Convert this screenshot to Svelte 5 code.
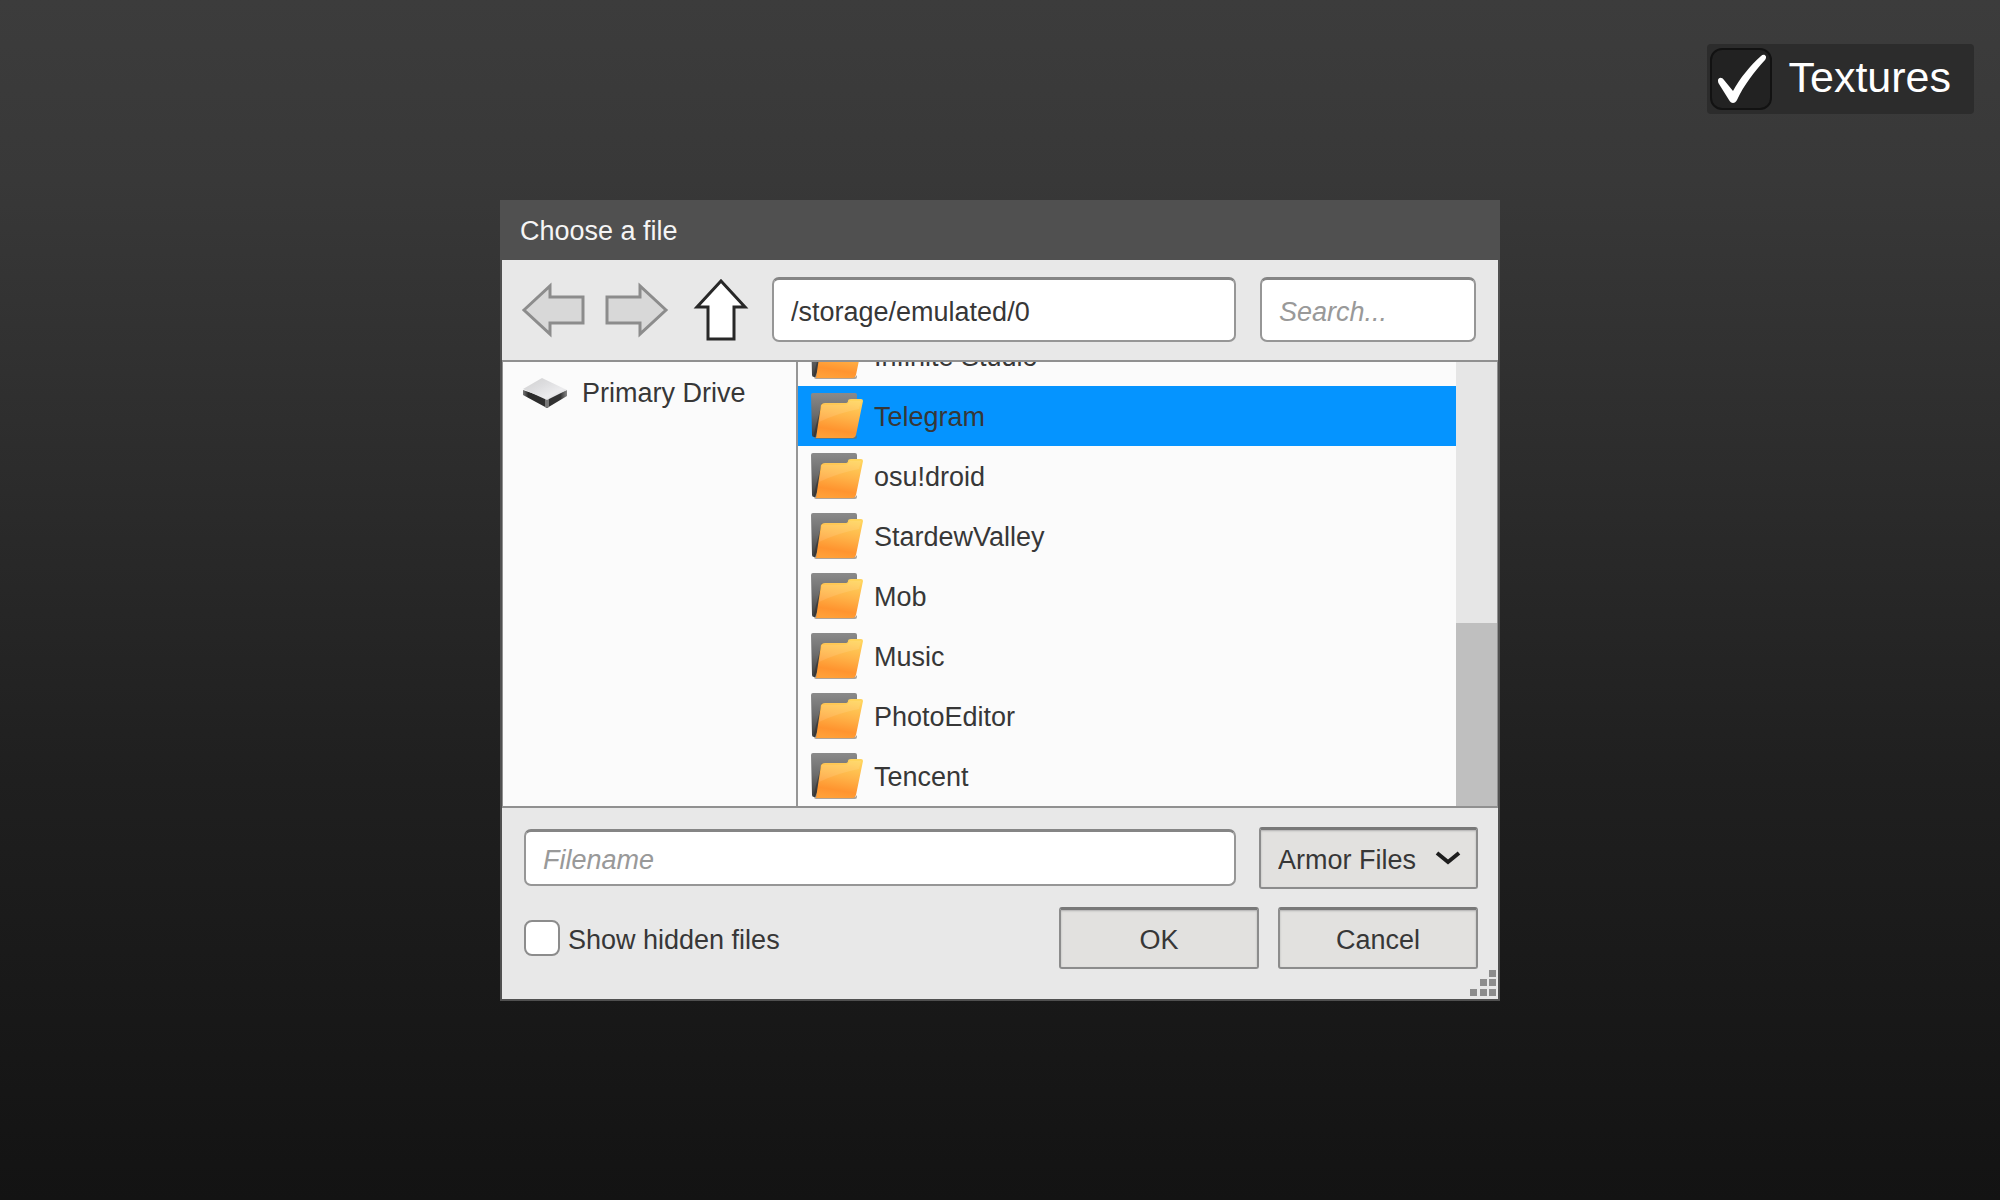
<script>
  const folders = [
    'Infinite Studio',
    'Telegram',
    'osu!droid',
    'StardewValley',
    'Mob',
    'Music',
    'PhotoEditor',
    'Tencent'
  ];

  let textures = $state(true);
  let showHidden = $state(false);
  let selected = $state('Telegram');
  let path = $state('/storage/emulated/0');
  let search = $state('');
  let filename = $state('');
  let filter = $state('Armor Files');
</script>

<main class="stage">
  <label class="toggle">
    <input class="sr-only" type="checkbox" bind:checked={textures} />
    <span class="toggle-box">
      {#if textures}
        <svg width="58" height="58" viewBox="0 0 58 58" aria-hidden="true">
          <path
            d="M6 30c1-3 4-3 6 0l9 11C28 28 38 16 49 6c3-3 7 0 4 4C42 22 32 35 25 50c-2 4-6 4-8 0L7 34c-1-1-1-3-1-4Z"
            fill="#fff"
          />
        </svg>
      {/if}
    </span>
    <span class="toggle-text">Textures</span>
  </label>

  <section class="dialog" role="dialog" aria-labelledby="dialog-title">
    <h1 class="titlebar" id="dialog-title">Choose a file</h1>

    <div class="toolbar">
      <button class="nav" aria-label="Back" disabled>
        <svg width="64" height="56" viewBox="0 0 64 56">
          <path d="M2 28 28 4v11h33v26H28v11Z" />
        </svg>
      </button>
      <button class="nav" aria-label="Forward" disabled>
        <svg width="64" height="56" viewBox="0 0 64 56">
          <path d="M61 28 35 4v11H2v26h33v11Z" />
        </svg>
      </button>
      <button class="nav up" aria-label="Up one level">
        <svg width="56" height="64" viewBox="0 0 56 64">
          <path d="M28 3 52 29H41v32H15V29H4Z" />
        </svg>
      </button>
      <input class="field path" type="text" aria-label="Path" bind:value={path} />
      <input class="field search" type="text" aria-label="Search" placeholder="Search..." bind:value={search} />
    </div>

    <div class="browser">
      <nav class="places">
        <button class="place">
          <svg width="46" height="32" viewBox="0 0 46 32" aria-hidden="true">
            <defs>
              <linearGradient id="drive-top" x1="0" y1="0" x2="1" y2="1">
                <stop offset="0" stop-color="#d0d0d0" />
                <stop offset="0.4" stop-color="#dedee0" />
                <stop offset="0.7" stop-color="#ececee" />
                <stop offset="1" stop-color="#c4c4c6" />
              </linearGradient>
              <linearGradient id="drive-side" x1="0" y1="0" x2="1" y2="0">
                <stop offset="0" stop-color="#777" />
                <stop offset="0.12" stop-color="#2a2a2a" />
                <stop offset="0.85" stop-color="#343434" />
                <stop offset="1" stop-color="#888" />
              </linearGradient>
            </defs>
            <path d="M1 13 24 21 45 13v6L25 31 1 18Z" fill="url(#drive-side)" />
            <path d="M23 22v8l2 1 2-1v-8Z" fill="#777" />
            <path d="M1 12 20 1l25 12-20 10Z" fill="url(#drive-top)" />
          </svg>
          Primary Drive
        </button>
      </nav>

      <ul class="files">
        {#each folders as folder}
          <li>
            <button class="file" class:selected={folder === selected} onclick={() => (selected = folder)}>
              <svg width="54" height="50" viewBox="0 0 54 50" aria-hidden="true">
                <defs>
                  <linearGradient id="folder-back" x1="0" y1="0" x2="0" y2="1">
                    <stop offset="0" stop-color="#8a8a8a" />
                    <stop offset="0.5" stop-color="#6c6c6c" />
                    <stop offset="1" stop-color="#3c3c3c" />
                  </linearGradient>
                  <linearGradient id="folder-front" x1="0.6" y1="0" x2="0.4" y2="1">
                    <stop offset="0" stop-color="#ffd45c" />
                    <stop offset="0.45" stop-color="#ffb348" />
                    <stop offset="0.8" stop-color="#ff942f" />
                    <stop offset="1" stop-color="#ffa038" />
                  </linearGradient>
                </defs>
                <path d="M1 4q0-2 2-2h42q2 0 2 2v10H20L5 46H4q-2 0-2-2Z" fill="url(#folder-back)" />
                <path d="M12 12 4 42v4h4l6-32Z" fill="#303030" fill-opacity="0.6" />
                <path d="M4 46h40q2 0 3-2v2q0 2-2 2H6q-2 0-2-2Z" fill="#7d6a55" fill-opacity="0.6" />
                <path d="M11 14q1-2 4-2h20q3 0 3-2t3-2h10q2 0 2 2l-7 34q-1 3-3 3H6Z" fill="url(#folder-front)" />
                <path d="M12 14h21q5 0 7-4h11l-2 8Q28 22 9 31Z" fill="#fff" fill-opacity="0.1" />
              </svg>
              {folder}
            </button>
          </li>
        {/each}
      </ul>

      <div class="scrollbar">
        <div class="thumb"></div>
      </div>
    </div>

    <div class="footer">
      <div class="footer-row">
        <input class="field name" type="text" aria-label="Filename" placeholder="Filename" bind:value={filename} />
        <div class="filter">
          <select class="control" aria-label="File type" bind:value={filter}>
            <option>Armor Files</option>
          </select>
          <svg width="26" height="16" viewBox="0 0 26 16" aria-hidden="true">
            <path d="M2 3 13 12 24 3" fill="none" stroke="#1e1e1e" stroke-width="4" />
          </svg>
        </div>
      </div>
      <div class="footer-row actions">
        <label class="hidden-files">
          <input type="checkbox" bind:checked={showHidden} />
          <span>Show hidden files</span>
        </label>
        <button class="control">OK</button>
        <button class="control">Cancel</button>
      </div>
      <svg class="grip" width="26" height="26" viewBox="0 0 26 26" aria-hidden="true">
        <path d="M19 0h7v7h-7ZM10 9h7v7h-7ZM19 9h7v7h-7ZM0 19h7v7H0ZM10 19h7v7h-7ZM19 19h7v7h-7Z" fill="#8c8c8c" />
      </svg>
    </div>
  </section>
</main>

<style>
  :global(body) {
    margin: 0;
  }

  .stage {
    display: grid;
    min-height: 100vh;
    background: linear-gradient(#3c3c3c, #383838 15%, #1f1f1f 65%, #181818 85%, #131313);
    font-family: 'Liberation Sans', Arial, sans-serif;
    font-size: 27px;
    line-height: 32px;
    color: #373737;
  }

  .stage :is(*) {
    box-sizing: border-box;
  }

  button,
  input,
  select {
    font: inherit;
    color: inherit;
  }

  .toggle {
    grid-area: 1 / 1;
    place-self: start end;
    display: flex;
    align-items: center;
    gap: 16px;
    height: 70px;
    margin: 44px 26px 0 0;
    padding: 0 23px 0 3px;
    border-radius: 4px;
    background: #2c2c2c;
    color: #fff;
    font-size: 43px;
    line-height: 48px;
  }

  .toggle-text {
    padding-bottom: 4px;
  }

  .sr-only {
    position: absolute;
    width: 1px;
    height: 1px;
    margin: 0;
    opacity: 0;
  }

  .toggle-box {
    width: 62px;
    height: 62px;
    border: 2px solid #121212;
    border-radius: 12px;
    background: #222;
  }

  .toggle-box svg {
    display: block;
  }

  .dialog {
    grid-area: 1 / 1;
    place-self: center;
    width: 50%;
    min-width: 900px;
    border: 2px solid #505050;
    border-top: 0;
    background: #e8e8e8;
  }

  .titlebar {
    margin: 0;
    padding: 15px 18px 13px;
    background: #505050;
    color: #f5f5f5;
    font-size: inherit;
    font-weight: normal;
  }

  .toolbar {
    display: flex;
    align-items: center;
    height: 100px;
    padding: 0 22px 0 20px;
  }

  .nav {
    display: flex;
    margin-right: 19px;
    padding: 0;
    border: 0;
    background: none;
  }

  .nav path {
    fill: #d8d8d8;
    stroke: #8c8c8c;
    stroke-width: 3;
  }

  .up {
    margin: 0 23px 0 5px;
  }

  .up path {
    fill: #fff;
    stroke: #282828;
  }

  .field {
    min-width: 0;
    padding: 4px 17px 0;
    border: 2px solid #969696;
    border-top: 3px solid #858585;
    border-radius: 7px;
    background: #fff;
    outline: 0;
  }

  .field::placeholder {
    color: #999;
    font-style: italic;
    opacity: 1;
  }

  .path,
  .name {
    flex: 1;
  }

  .path,
  .search {
    height: 65px;
  }

  .path {
    margin-right: 24px;
  }

  .search {
    width: 216px;
  }

  .browser {
    display: flex;
    height: 448px;
    border: 2px solid #909090;
    border-width: 2px 1px;
    background: #fbfbfb;
  }

  .places {
    width: 295px;
    border-right: 2px solid #969696;
  }

  .place {
    display: flex;
    align-items: center;
    gap: 14px;
    width: 100%;
    height: 60px;
    padding: 2px 19px 0;
    border: 0;
    background: none;
  }

  /* Scrolled to the end, so the rows hang from the bottom edge */
  .files {
    flex: 1;
    display: flex;
    flex-direction: column;
    justify-content: flex-end;
    overflow: hidden;
    margin: 0;
    padding: 0;
    list-style: none;
  }

  .file {
    display: flex;
    align-items: center;
    gap: 10px;
    width: 100%;
    height: 60px;
    padding: 2px 12px 0;
    border: 0;
    background: none;
    text-align: left;
  }

  .file svg {
    margin-bottom: 2px;
  }

  .selected {
    background: #0594ff;
  }

  .scrollbar {
    display: flex;
    align-items: flex-end;
    width: 41px;
    background: #e6e6e6;
  }

  .thumb {
    width: 100%;
    height: 41%;
    background: #bfbfbf;
  }

  .footer {
    display: grid;
    gap: 18px;
    padding: 19px 20px 0 22px;
  }

  .footer-row {
    display: flex;
    align-items: center;
    gap: 23px;
  }

  .actions {
    gap: 19px;
  }

  .name {
    height: 57px;
  }

  .control {
    width: 200px;
    height: 62px;
    padding: 3px 17px 0;
    border: 2px solid #8c8c8c;
    border-top: 3px solid #787878;
    border-radius: 3px;
    background: #e2e1df;
    box-shadow: inset 0 1px 2px #b0b0b0;
  }

  .filter {
    display: grid;
    align-items: center;
  }

  .filter > * {
    grid-area: 1 / 1;
  }

  .filter select {
    width: 219px;
    appearance: none;
  }

  .filter svg {
    justify-self: end;
    margin-right: 17px;
    pointer-events: none;
  }

  .hidden-files {
    display: flex;
    flex: 1;
    align-items: center;
    gap: 8px;
  }

  .hidden-files span {
    padding-top: 4px;
  }

  .hidden-files input {
    appearance: none;
    width: 36px;
    height: 36px;
    margin: 0;
    border: 2px solid #8c8c8c;
    border-radius: 8px;
    background: #fff;
  }

  .hidden-files input:checked {
    background: #0594ff;
  }

  .grip {
    display: block;
    justify-self: end;
    margin: -17px -18px 3px 0;
  }
</style>
